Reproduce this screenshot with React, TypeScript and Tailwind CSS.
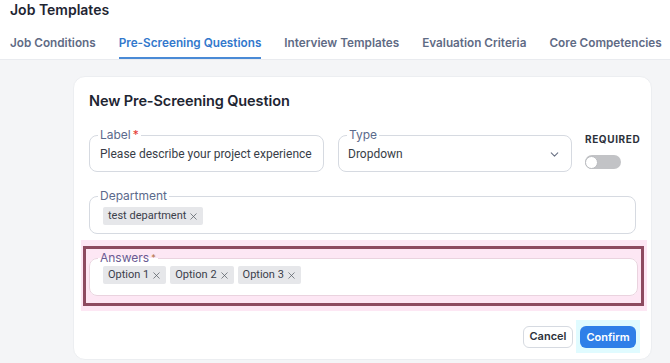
import { ChevronDown, X } from "lucide-react"

const tabs = ["Job Conditions", "Pre-Screening Questions", "Interview Templates", "Evaluation Criteria", "Core Competencies"]

const Chip = ({ text }: { text: string }) => (
  <span className="flex items-center gap-[2px] h-[18px] pl-[5px] pr-[4px] rounded-[2px] bg-[#e6e7ea] font-['Roboto',sans-serif] text-[11px] text-[#3b404a]">
    {text}
    <X size={11} strokeWidth={1.6} className="text-[#555a63]" />
  </span>
)

const App = () => {
  return (
    <div className="w-[670px] h-[363px] overflow-hidden bg-[#f4f5f7] font-['Inter',sans-serif]">
      {/* header */}
      <div className="bg-white border-b border-[#e9ebef] pl-[10px]">
        <h1 className="text-[14px] leading-[20px] font-semibold text-[#1e2532]">Job Templates</h1>
        <div className="flex gap-[23px] mt-[15px]">
          {tabs.map((t, i) => (
            <div
              key={t}
              className={
                "text-[11.75px] leading-[16px] font-semibold pb-[6px] border-b-[2px] whitespace-nowrap " +
                (i === 1 ? "text-[#3278cc] border-[#4a8ad6]" : "text-[#5f6b85] border-transparent")
              }
            >
              {t}
            </div>
          ))}
        </div>
      </div>

      {/* body */}
      <div className="pl-[73px] pr-[18px] pt-4">
        <div className="bg-white rounded-xl border border-[#eceef1] px-[15px] pt-[14px] pb-[6px]">
          <h2 className="text-[14.5px] leading-[20px] font-semibold tracking-[-0.1px] text-[#1e2532]">New Pre-Screening Question</h2>

          <div className="flex items-start mt-[18px]">
            <fieldset className="w-[235px] min-w-0 shrink-0 h-[43px] border border-[#d6dae1] rounded-lg">
              <legend className="ml-[8px] px-[2px] text-[12px] leading-[12px] text-[#5b6a8c]">
                Label<span className="text-[#e53935] ml-[2px]">*</span>
              </legend>
              <div className="h-[30px] flex items-center pb-1 pl-[10px] font-['Roboto',sans-serif] text-[12px] text-[#383d47] whitespace-nowrap overflow-hidden">
                Please describe your project experience
              </div>
            </fieldset>
            <fieldset className="w-[234px] min-w-0 shrink-0 h-[43px] ml-[14px] border border-[#d6dae1] rounded-lg">
              <legend className="ml-[8px] px-[2px] text-[12px] leading-[12px] text-[#5b6a8c]">Type</legend>
              <div className="h-[30px] flex items-center justify-between pb-1 pl-[9px] pr-[10px] font-['Roboto',sans-serif] text-[12px] text-[#383d47]">
                Dropdown
                <ChevronDown size={13} strokeWidth={2} className="text-[#6b7385]" />
              </div>
            </fieldset>
            <div className="ml-[13px] pt-[4px]">
              <div className="text-[10px] leading-[12px] font-bold tracking-[0.6px] text-[#2c313a]">REQUIRED</div>
              <div className="mt-[10px] w-[36px] h-[14px] rounded-full bg-[#c2c3c6] flex items-center">
                <div className="w-[13px] h-[13px] rounded-full bg-white border border-[#b9bbbf]" />
              </div>
            </div>
          </div>

          <fieldset className="mt-[18px] min-w-0 h-[44px] border border-[#d6dae1] rounded-lg">
            <legend className="ml-[8px] px-[2px] text-[12px] leading-[12px] text-[#5b6a8c]">Department</legend>
            <div className="h-[31px] flex items-center gap-1 pb-[3px] pl-[13px]">
              <Chip text="test department" />
            </div>
          </fieldset>

          {/* highlighted answers */}
          <div className="mt-[6px] -ml-[8px] -mr-[11px] bg-[#fde7f4] pt-[6px] pl-[2px] pr-[3px] pb-[5px]">
            <div className="border-[3px] border-[#8d4b60] pt-[3px] pl-[3px] pr-[3px] pb-[7px]">
              <fieldset className="min-w-0 h-[44px] border border-[#ead3df] rounded-lg bg-white">
                <legend className="ml-[8px] px-[2px] text-[12px] leading-[12px] text-[#6a5a92]">
                  Answers<span className="text-[#b0703f] text-[9px] ml-[2px] align-top">*</span>
                </legend>
                <div className="h-[31px] flex items-start gap-[4px] pt-[2px] pl-[13px]">
                  <Chip text="Option 1" />
                  <Chip text="Option 2" />
                  <Chip text="Option 3" />
                </div>
              </fieldset>
            </div>
          </div>

          <div className="flex justify-end items-center mt-[9px] -mr-[4px]">
            <button className="h-[22px] w-[50px] rounded-md border border-[#d6dae1] bg-white text-[11px] font-semibold text-[#2c313a]">
              Cancel
            </button>
            <div className="ml-[3px] bg-[#e0fbff] pt-[3px] pb-[5px] px-[4px]">
              <button className="h-[22px] w-[56px] rounded-md bg-[#2f7fe8] text-[11px] font-semibold text-white">
                Confirm
              </button>
            </div>
          </div>
        </div>
      </div>
    </div>
  )
}

export default App
